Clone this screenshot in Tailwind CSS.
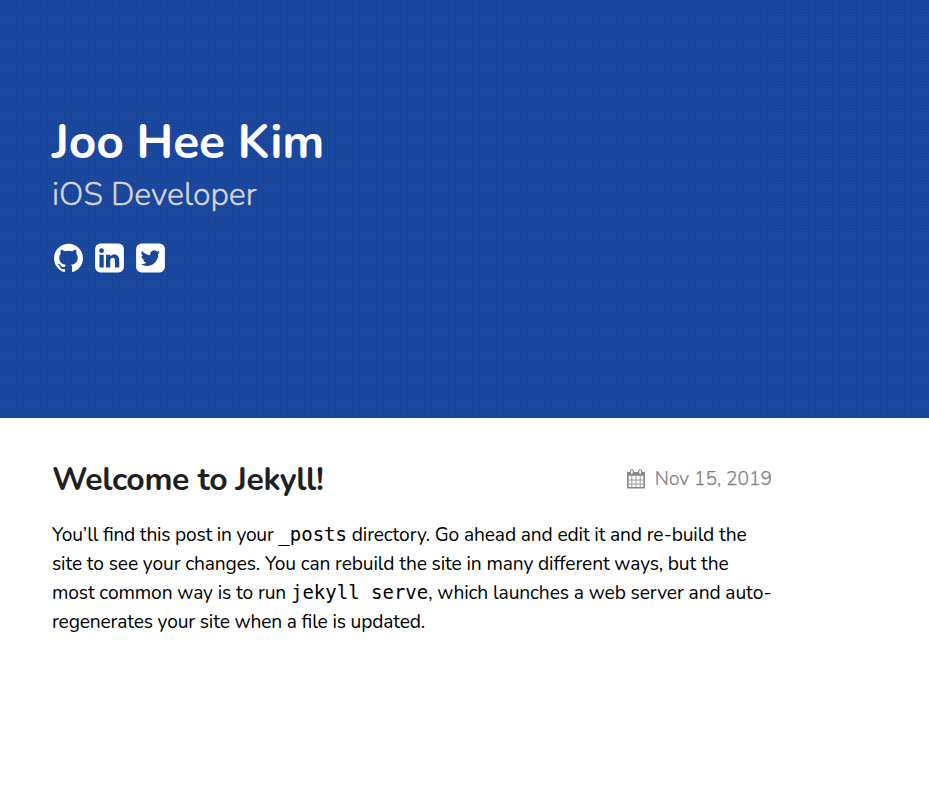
<!DOCTYPE html>
<html lang="en">
<head>
<meta charset="utf-8">
<title>Joo Hee Kim</title>
<script src="https://cdn.jsdelivr.net/npm/@tailwindcss/browser@4"></script>
</head>
<body class="min-h-screen bg-white font-['Nunito','Lato',sans-serif] text-black">
<header class="h-[418px] bg-[#1a479c] bg-[repeating-linear-gradient(0deg,rgba(0,35,130,0.1)_0px,rgba(0,35,130,0.1)_1px,transparent_1px,transparent_3px),repeating-linear-gradient(90deg,rgba(45,100,190,0.16)_0px,rgba(45,100,190,0.16)_1px,transparent_1px,transparent_3px)] pl-[52px] pt-[112px]">
  <h1 class="h-[61px] whitespace-nowrap text-[48px] leading-[60px] font-bold tracking-[-0.25px] text-white">Joo Hee Kim</h1>
  <p class="h-[44px] whitespace-nowrap text-[32px] leading-[44px] font-light text-[#d5d5d5] [-webkit-text-stroke:0.4px_#d5d5d5]">iOS Developer</p>
  <nav class="mt-[26px] ml-[2px] flex gap-[12px] text-white">
    <a aria-label="GitHub"><svg class="h-[30px] w-[29px]" viewBox="0 0 24 24" fill="currentColor"><path d="M12 .297c-6.63 0-12 5.373-12 12 0 5.303 3.438 9.8 8.205 11.385.6.113.82-.258.82-.577 0-.285-.01-1.04-.015-2.04-3.338.724-4.042-1.61-4.042-1.61C4.422 18.07 3.633 17.7 3.633 17.7c-1.087-.744.084-.729.084-.729 1.205.084 1.838 1.236 1.838 1.236 1.07 1.835 2.809 1.305 3.495.998.108-.776.417-1.305.76-1.605-2.665-.3-5.466-1.332-5.466-5.93 0-1.31.465-2.38 1.235-3.22-.135-.303-.54-1.523.105-3.176 0 0 1.005-.322 3.3 1.23.96-.267 1.98-.399 3-.405 1.02.006 2.04.138 3 .405 2.28-1.552 3.285-1.23 3.285-1.23.645 1.653.24 2.873.12 3.176.765.84 1.23 1.91 1.23 3.22 0 4.61-2.805 5.625-5.475 5.92.42.36.81 1.096.81 2.22 0 1.606-.015 2.896-.015 3.286 0 .315.21.69.825.57C20.565 22.092 24 17.592 24 12.297c0-6.627-5.373-12-12-12"/></svg></a>
    <a aria-label="LinkedIn"><svg class="h-[30px] w-[29px]" viewBox="0 0 30 30"><rect x=".1" y=".1" width="29.8" height="29.8" rx="5.5" fill="currentColor"/><g fill="#1a479c"><circle cx="6.8" cy="7.4" r="2.5"/><path d="M4.6 11.6H9v13.3H4.6zM11.4 11.6h4.4v1.9c.8-1.2 2-2.2 4.1-2.2 3 0 5.2 2 5.2 6v7.6h-4.4v-7.1c0-1.8-.7-3-2.2-3-1.6 0-2.7 1.1-2.7 3v7.1h-4.4z"/></g></svg></a>
    <a aria-label="Twitter"><svg class="h-[30px] w-[29px]" viewBox="0 0 30 30"><rect x=".1" y=".1" width="29.8" height="29.8" rx="5.5" fill="currentColor"/><path transform="translate(5 5.2) scale(.83)" fill="#1a479c" d="M23.95 4.57a10 10 0 0 1-2.82.77 4.96 4.96 0 0 0 2.16-2.72c-.95.55-2 .95-3.13 1.18a4.92 4.92 0 0 0-8.38 4.48A14 14 0 0 1 1.64 3.16a4.92 4.92 0 0 0 1.52 6.57 4.9 4.9 0 0 1-2.23-.61v.06a4.92 4.92 0 0 0 3.95 4.83 5 5 0 0 1-2.21.08 4.94 4.94 0 0 0 4.6 3.42A9.87 9.87 0 0 1 0 19.54a14 14 0 0 0 7.55 2.21c9.05 0 14-7.5 14-13.98l-.02-.63a9.9 9.9 0 0 0 2.42-2.57z"/></svg></a>
  </nav>
</header>
<main class="w-[772px] pl-[52px] pt-[41px]">
  <div class="flex h-[40px] items-center justify-between">
    <h2 class="mt-[2px] whitespace-nowrap text-[32px] leading-[40px] font-bold tracking-[-0.36px] text-[#1f1f1f]">Welcome to Jekyll!</h2>
    <time class="flex items-center gap-[10px] whitespace-nowrap text-[19.2px] leading-[29px] font-light text-[#828282] [-webkit-text-stroke:0.25px_#828282]">
      <svg class="-mt-px h-[20px] w-[18px]" viewBox="0 0 18 20" fill="none" stroke="#888"><path d="M.8 3.8h16.4v15H.8z" stroke-width="1.6"/><path d="M.8 3h16.4v3.8H.8z" fill="#888" stroke="none"/><path d="M4.8 7v12M9 7v12M13.2 7v12M1 11h16M1 15h16" stroke-width=".8"/><rect x="3.5" y=".8" width="2.8" height="4.4" rx="1.4" fill="#fff" stroke-width="1.1"/><rect x="11.7" y=".8" width="2.8" height="4.4" rx="1.4" fill="#fff" stroke-width="1.1"/></svg>
      <span>Nov 15, 2019</span>
    </time>
  </div>
  <div class="mt-[22px] flex flex-col whitespace-nowrap text-[19.2px] leading-[29px] [font-feature-settings:'liga'_1]">
    <div class="h-[29px]"><span class="tracking-[-0.21px]">You’ll find this post in your </span><code class="font-['DejaVu_Sans_Mono',monospace] text-[19px] leading-none">_posts</code><span class="tracking-[-0.13px]"> directory. Go ahead and edit it and re-build the</span></div>
    <div class="h-[29px] tracking-[-0.12px]">site to see your changes. You can rebuild the site in many different ways, but the</div>
    <div class="h-[29px]"><span class="tracking-[-0.11px]">most common way is to run </span><code class="font-['DejaVu_Sans_Mono',monospace] text-[19px] leading-none">jekyll serve</code><span class="tracking-[-0.1px]">, which launches a web server and auto-</span></div>
    <div class="h-[29px] tracking-[-0.155px]">regenerates your site when a file is updated.</div>
  </div>
</main>
</body>
</html>
